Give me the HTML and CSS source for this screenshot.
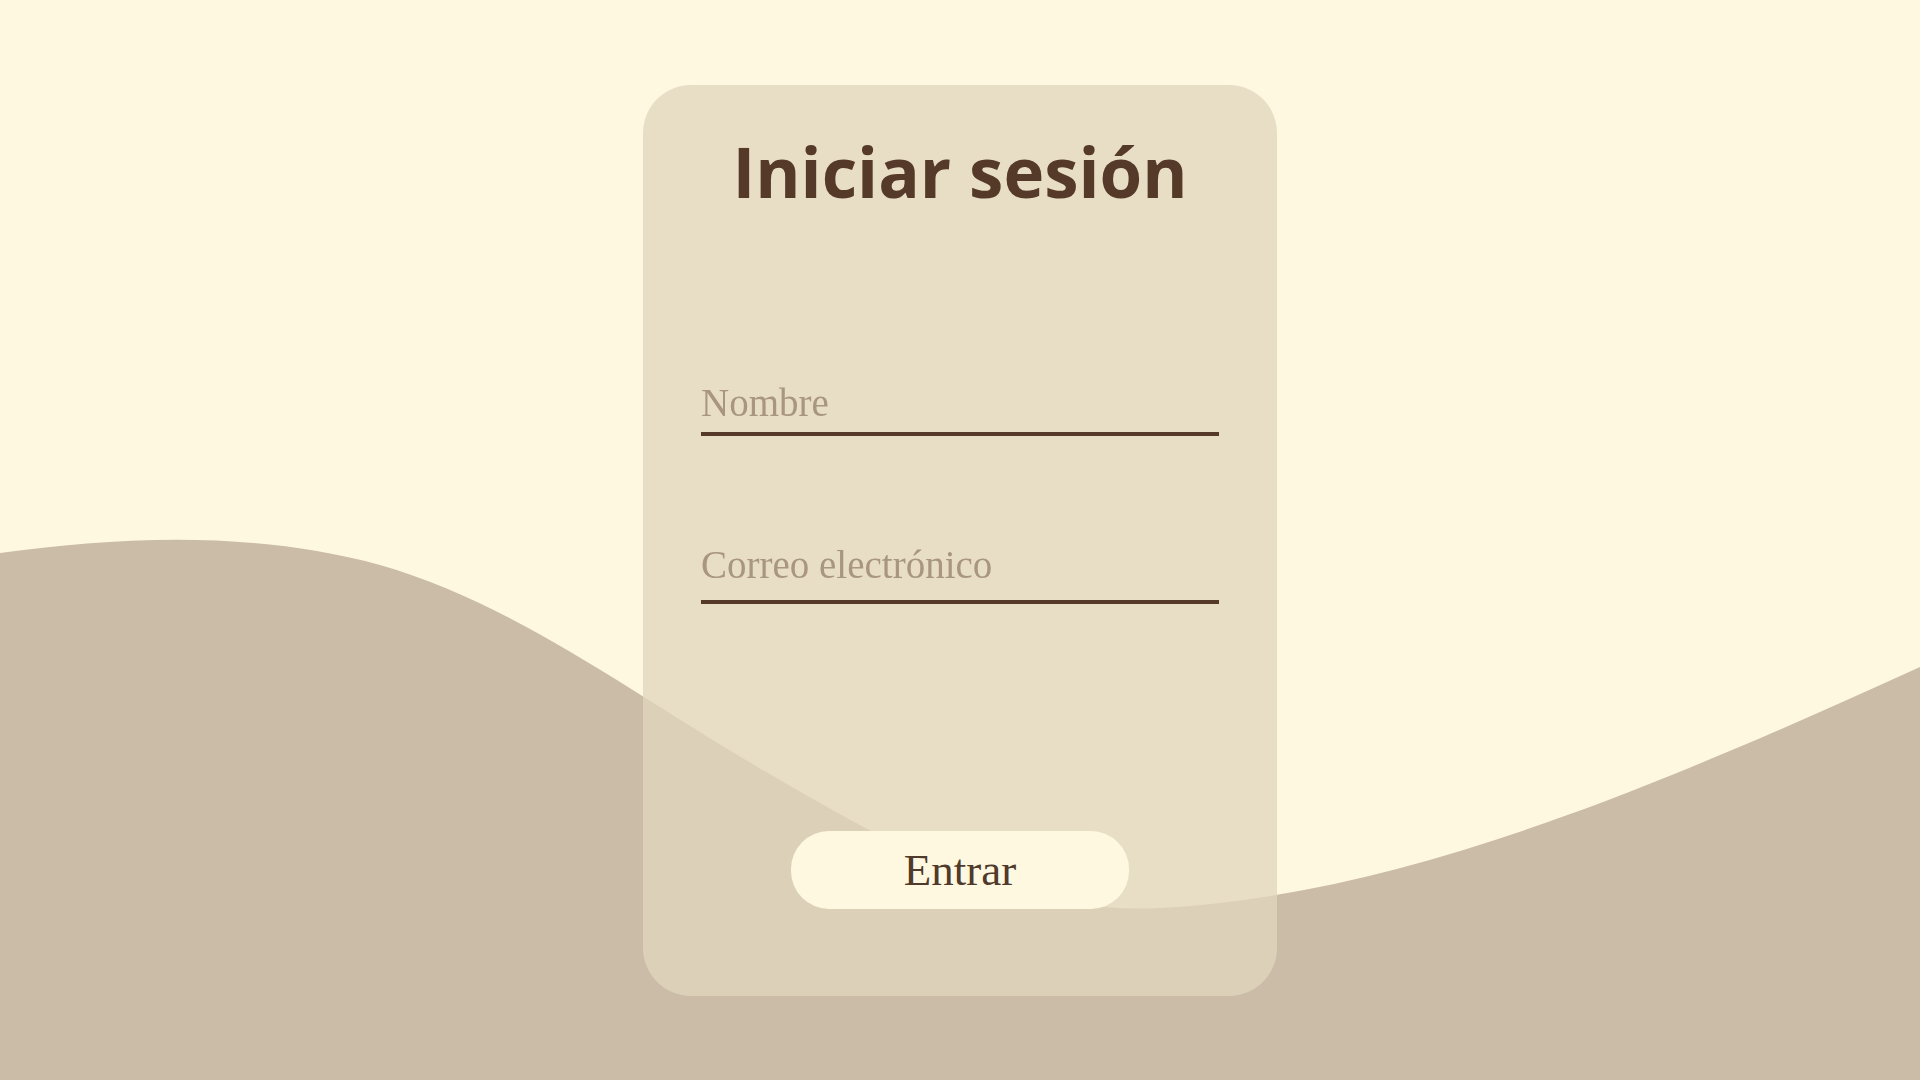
FILE: index.html
```html
<!DOCTYPE html>
<html lang="es">
<head>
    <meta charset="UTF-8">
    <meta name="viewport" content="width=device-width, initial-scale=1.0">
    <title>Iniciar sesión</title>
    <link rel="stylesheet" href="styles.css">
</head>
<body>
    <!-- onda de fondo -->
    <svg class="wave" viewBox="0 0 1920 1080" preserveAspectRatio="none">
        <path d="M0,553 C120,537 250,530 380,565 C520,605 640,700 780,780 C900,850 1020,915 1160,908 C1400,895 1650,790 1920,667 L1920,1080 L0,1080 Z" fill="#cbbca8"/>
    </svg>

    <form class="card" onsubmit="return false">
        <h1>Iniciar sesión</h1>
        <input class="field field-name" type="text" placeholder="Nombre">
        <input class="field field-mail" type="email" placeholder="Correo electrónico">
        <button type="submit" class="btn">Entrar</button>
    </form>
</body>
</html>
```

FILE: styles.css
```css
body {
    margin: 0;
    padding: 0;
    height: 100vh;
    display: flex;
    align-items: center;
    justify-content: center;
    background-color: #fff8e1;
    overflow: hidden;
}
.wave {
    position: fixed;
    top: 0;
    left: 0;
    width: 100%;
    height: 100%;
    z-index: 0;
}
.card {
    position: relative;
    z-index: 1;
    box-sizing: border-box;
    width: 634px;
    height: 911px;
    padding: 39px 58px 0;
    display: flex;
    flex-direction: column;
    align-items: center;
    background-color: rgba(225, 214, 190, 0.77);
    border-radius: 48px;
}
h1 {
    margin: 0;
    font-family: "Open Sans", "Noto Sans", sans-serif;
    font-weight: 700;
    font-size: 69px;
    line-height: normal;
    color: #563a29;
}
.field {
    box-sizing: content-box;
    width: 100%;
    height: 45px;
    line-height: 45px;
    padding: 0;
    border: none;
    border-bottom: 4px solid #563a29;
    background: transparent;
    outline: none;
    font-family: "Liberation Serif", serif;
    font-size: 39px;
    color: #563a29;
}
.field::placeholder {
    color: #a8967f;
}
.field-name {
    margin-top: 162px;
    padding-bottom: 7px;
}
.field-mail {
    margin-top: 106px;
    padding-bottom: 13px;
}
.btn {
    margin-top: 227px;
    width: 338px;
    height: 78px;
    padding: 0;
    border: none;
    border-radius: 38px;
    background-color: #fff8e1;
    font-family: "Liberation Serif", serif;
    font-size: 45px;
    color: #4f3a2c;
    cursor: pointer;
}
```
